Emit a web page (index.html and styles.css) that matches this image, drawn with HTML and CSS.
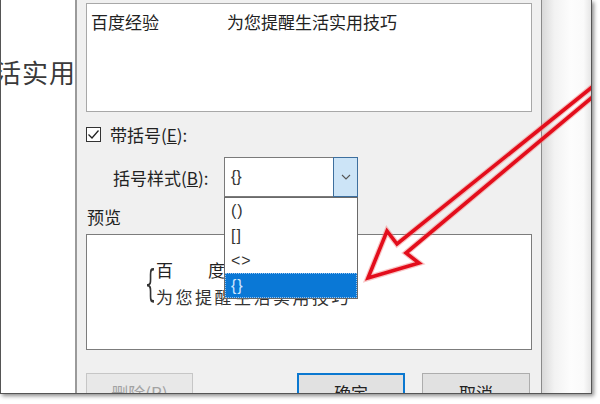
FILE: index.html
```html
<!DOCTYPE html>
<html lang="zh-CN">
<head>
<meta charset="utf-8">
<title>双行合一</title>
<link rel="stylesheet" href="styles.css">
</head>
<body>
<div class="frame">
  <div class="doc"><span class="doc-text">活实用</span></div>
  <div class="dialog">
    <div class="listbox">
      <div class="list-row"><span class="col1">百度经验</span><span class="col2">为您提醒生活实用技巧</span></div>
    </div>
    <div class="check-row">
      <span class="checkbox"><svg width="13" height="13" viewBox="0 0 13 13"><polyline points="1.5,6.5 5,10 11.5,2.5" fill="none" stroke="#222" stroke-width="1.3"/></svg></span>
      <span class="label">带括号(<u>E</u>):</span>
    </div>
    <div class="style-row">
      <span class="label style-label">括号样式(<u>B</u>):</span>
      <div class="combo">
        <div class="combo-field">
          <span class="combo-value">{}</span>
          <span class="combo-btn"><svg width="10" height="6" viewBox="0 0 10 6"><polyline points="1,1 5,5 9,1" fill="none" stroke="#555" stroke-width="1.1"/></svg></span>
        </div>
        <ul class="dropdown">
          <li>()</li>
          <li>[]</li>
          <li>&lt;&gt;</li>
          <li class="selected">{}</li>
        </ul>
      </div>
    </div>
    <div class="preview-label">预览</div>
    <div class="preview">
      <span class="brace">{</span>
      <div class="lines">
        <div class="line1">百度经验</div>
        <div class="line2">为您提醒生活实用技巧</div>
      </div>
    </div>
    <div class="buttons">
      <button class="btn disabled">删除(<u>R</u>)</button>
      <button class="btn primary">确定</button>
      <button class="btn">取消</button>
    </div>
  </div>
  <div class="side"></div>
  <svg class="arrow" width="590" height="393" viewBox="0 0 590 393">
    <defs><filter id="soft" x="-5%" y="-5%" width="110%" height="110%"><feGaussianBlur stdDeviation="0.6"/></filter></defs>
    <polygon points="600,80 396,244 386,231 367,278 418,263 405,253 600,90" fill="none" stroke="#f08080" stroke-width="6" stroke-linejoin="miter" opacity="0.45" filter="url(#soft)"/>
    <polygon points="600,80 396,244 386,231 367,278 418,263 405,253 600,90" fill="none" stroke="#e3101a" stroke-width="3.6" stroke-linejoin="miter" filter="url(#soft)"/>
  </svg>
</div>
</body>
</html>
```

FILE: styles.css
```css
* { box-sizing: border-box; margin: 0; padding: 0; }
html, body { width: 600px; height: 404px; background: #fff; overflow: hidden; }
body { font-family: "Noto Sans CJK SC", "Noto Sans", sans-serif; color: #222; }

.frame {
  position: relative;
  display: flex;
  width: 592px;
  height: 394px;
  border: 1px solid #555;
  border-top: none;
  box-shadow: 2px 2px 4px rgba(0, 0, 0, 0.45);
  overflow: hidden;
  background: #fff;
}

.doc {
  width: 74px;
  flex: none;
  display: flex;
  justify-content: flex-end;
  overflow: hidden;
  background: #fff;
}
.doc-text {
  font-size: 26px;
  line-height: 30px;
  padding-top: 57px;
  white-space: nowrap;
  letter-spacing: 1px;
  margin-right: -1px;
  color: #3a3a3a;
}

.dialog {
  width: 467px;
  flex: none;
  display: flex;
  flex-direction: column;
  background: #f0f0f0;
  border-left: 2px solid #9a9a9a;
  border-right: 1px solid #8a8a8a;
  padding: 3px 9px 0;
  font-size: 17px;
}

.listbox {
  height: 109px;
  flex: none;
  background: #fff;
  border: 1px solid #a8a8a8;
  padding: 8px 4px 0;
}
.list-row { display: flex; line-height: 20px; white-space: nowrap; }
.col1 { width: 136px; }

.check-row {
  margin-top: 14px;
  height: 17px;
  display: flex;
  align-items: center;
  gap: 9px;
  line-height: 17px;
}
.checkbox {
  width: 15px;
  height: 15px;
  border: 1px solid #333;
  background: #fff;
  display: flex;
  align-items: center;
  justify-content: center;
}

.style-row {
  margin-top: 14px;
  height: 40px;
  display: flex;
  align-items: center;
  position: relative;
  z-index: 5;
}
.style-label { width: 138px; padding-left: 27px; white-space: nowrap; }

.combo { position: relative; width: 134px; height: 40px; }
.combo-field {
  height: 40px;
  display: flex;
  align-items: center;
  background: #fff;
  border: 1px solid #7a7a7a;
  border-right: none;
}
.combo-value { flex: 1; padding-left: 6px; font-family: "Liberation Sans", sans-serif; font-size: 16px; color: #333; }
.combo-btn {
  width: 25px;
  height: 40px;
  margin-top: -1px;
  margin-bottom: -1px;
  background: #cce4f7;
  border: 1px solid #3d6f9e;
  display: flex;
  align-items: center;
  justify-content: center;
}

.dropdown {
  position: absolute;
  top: 40px;
  left: 0;
  width: 134px;
  list-style: none;
  background: #fff;
  border: 1px solid #6a6a6a;
  font-family: "Liberation Sans", sans-serif;
  font-size: 16px;
  color: #333;
}
.dropdown li {
  height: 25px;
  line-height: 25px;
  padding-left: 6px;
  letter-spacing: 1px;
}
.dropdown li.selected {
  background: #0a78d6;
  color: #cfe6ff;
  outline: 1px dotted #9ac4ee;
  outline-offset: -1px;
}

.preview-label { margin-top: 8px; height: 24px; line-height: 24px; padding-left: 1px; }

.preview {
  margin-top: 5px;
  height: 116px;
  flex: none;
  background: #fff;
  border: 1px solid #7c7c7c;
  display: flex;
  padding: 21px 0 0 56px;
  position: relative;
  z-index: 1;
}
.brace {
  width: 13px;
  font-family: "DejaVu Sans", sans-serif;
  font-size: 24px;
  line-height: 30px;
  height: 30px;
  color: #333;
  transform: scale(0.75, 1.55);
  transform-origin: 50% 0;
  margin-top: 4px;
}
.lines { line-height: 27px; }
.line1 { letter-spacing: 35px; white-space: nowrap; }
.line2 { letter-spacing: 2.5px; white-space: nowrap; color: #333; }

.buttons {
  margin-top: 23px;
  display: flex;
  gap: 17px;
  padding-right: 2px;
}
.btn {
  width: 108px;
  height: 38px;
  flex: none;
  font-family: "Noto Sans CJK SC", sans-serif;
  font-size: 17px;
  background: #e1e1e1;
  border: 1px solid #adadad;
  color: #222;
}
.btn.disabled { width: 107px; background: #e8e8e8; border-color: #c6c6c6; color: #a2a2a2; }
.btn.primary { margin-left: auto; border: 2px solid #0b78d0; }

.side {
  flex: 1;
  background: linear-gradient(to right, #d9d9d9 0%, #f2f2f2 25%, #fdfdfd 60%, #fafafa 85%, #e6e6e6 100%);
}

.arrow {
  position: absolute;
  left: 0;
  top: 0;
  z-index: 10;
  pointer-events: none;
}
```
